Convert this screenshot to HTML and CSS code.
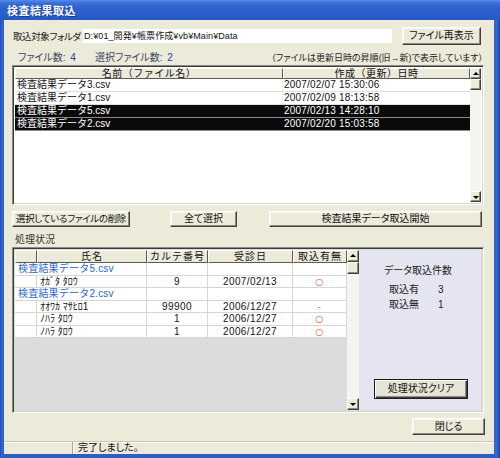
FILE: index.html
```html
<!DOCTYPE html>
<html lang="ja">
<head>
<meta charset="utf-8">
<title>検査結果取込</title>
<link rel="stylesheet" href="styles.css">
</head>
<body>
<div class="window">
  <div class="titlebar"><span class="title">検査結果取込</span></div>
  <div class="body">
    <div class="content">
      <div class="folder-row">
        <span class="lbl">取込対象フォルダ</span>
        <div class="textbox">D:¥01_開発¥帳票作成¥vb¥Main¥Data</div>
        <button class="btn btn-refresh">ファイル再表示</button>
      </div>
      <div class="info-row">
        <span class="info info-count">ファイル数: <b>4</b></span>
        <span class="info">選択ファイル数: <b>2</b></span>
        <span class="note">（ファイルは更新日時の昇順(旧→新)で表示しています）</span>
      </div>
      <div class="listbox sunken">
        <div class="list-main">
          <div class="list-head">
            <div class="hc hc-name">名前（ファイル名）</div>
            <div class="hc hc-date">作成（更新）日時</div>
          </div>
          <div class="lrow"><div class="c-name">検査結果データ3.csv</div><div class="c-date">2007/02/07 15:30:06</div></div>
          <div class="lrow"><div class="c-name">検査結果データ1.csv</div><div class="c-date">2007/02/09 18:13:58</div></div>
          <div class="lrow sel"><div class="c-name">検査結果データ5.csv</div><div class="c-date">2007/02/13 14:28:10</div></div>
          <div class="lrow sel"><div class="c-name">検査結果データ2.csv</div><div class="c-date">2007/02/20 15:03:58</div></div>
        </div>
        <div class="vscroll vs-list">
          <div class="sb-btn up"></div>
          <div class="sb-thumb"></div>
          <div class="sb-track"></div>
          <div class="sb-btn down"></div>
        </div>
      </div>
      <div class="btn-row">
        <button class="btn btn-del">選択しているファイルの削除</button>
        <button class="btn btn-all">全て選択</button>
        <button class="btn btn-start">検査結果データ取込開始</button>
      </div>
      <div class="section-label">処理状況</div>
      <div class="frame sunken">
        <div class="grid">
          <div class="gh"></div>
          <div class="gh">氏名</div>
          <div class="gh">カルテ番号</div>
          <div class="gh">受診日</div>
          <div class="gh">取込有無</div>

          <div class="gc group">検査結果データ5.csv</div>
          <div class="gc"></div><div class="gc"></div><div class="gc"></div>

          <div class="gc"></div>
          <div class="gc name">ｵｶﾞﾀ ﾀﾛｳ</div>
          <div class="gc ctr">9</div>
          <div class="gc ctr">2007/02/13</div>
          <div class="gc ctr mark">○</div>

          <div class="gc group">検査結果データ2.csv</div>
          <div class="gc"></div><div class="gc"></div><div class="gc"></div>

          <div class="gc"></div>
          <div class="gc name">ｵｵﾜｶ ﾏｻﾋﾛ1</div>
          <div class="gc ctr">99900</div>
          <div class="gc ctr">2006/12/27</div>
          <div class="gc ctr mark">-</div>

          <div class="gc"></div>
          <div class="gc name">ﾉﾊﾗ ﾀﾛｳ</div>
          <div class="gc ctr">1</div>
          <div class="gc ctr">2006/12/27</div>
          <div class="gc ctr mark">○</div>

          <div class="gc"></div>
          <div class="gc name">ﾉﾊﾗ ﾀﾛｳ</div>
          <div class="gc ctr">1</div>
          <div class="gc ctr">2006/12/27</div>
          <div class="gc ctr mark">○</div>
        </div>
        <div class="vscroll vs-grid">
          <div class="sb-btn up"></div>
          <div class="sb-thumb"></div>
          <div class="sb-track"></div>
          <div class="sb-btn down"></div>
        </div>
        <div class="summary">
          <div class="sum-title">データ取込件数</div>
          <div class="sum-table">
            <span>取込有</span><span>3</span>
            <span>取込無</span><span>1</span>
          </div>
          <button class="btn btn-default btn-clear">処理状況クリア</button>
        </div>
      </div>
      <div class="close-row">
        <button class="btn btn-close">閉じる</button>
      </div>
    </div>
    <div class="statusbar">
      <div class="sp sp1"></div>
      <div class="sp sp2">完了しました。</div>
    </div>
  </div>
</div>
</body>
</html>
```
FILE: styles.css
```css
html, body {
  margin: 0;
  padding: 0;
}
body {
  width: 500px;
  height: 458px;
  overflow: hidden;
  background: #2a5dc6;
  font-family: "Liberation Sans", "Noto Sans CJK JP", sans-serif;
  font-size: 10px;
  color: #111;
}
.window {
  width: 500px;
  height: 458px;
  display: flex;
  flex-direction: column;
  background: linear-gradient(90deg, #1e4fb8 0, #3566d0 2px, #2b5ec8 4px, #2b5ec8 494px, #3a6ad2 496px, #1c4aae 500px);
}
.titlebar {
  height: 20px;
  flex: none;
  display: flex;
  align-items: center;
  padding-left: 7px;
  background: linear-gradient(180deg, #5a8ce8 0, #3a6fd8 3px, #2c62cf 8px, #2a5ecb 15px, #2558c4 20px);
}
.title {
  color: #fff;
  font-weight: bold;
  font-size: 11px;
  letter-spacing: 0.5px;
  font-feature-settings: "palt";
  text-shadow: 1px 1px 0 #1a3d94;
}
.body {
  flex: 1;
  margin: 0 6px 4px 4px;
  background: #ecead9;
  display: flex;
  flex-direction: column;
}
.content {
  flex: 1;
  padding: 7px 10px 0 8px;
  display: flex;
  flex-direction: column;
  font-feature-settings: "palt";
}
button {
  font-family: "Liberation Sans", "Noto Sans CJK JP", sans-serif;
  font-size: 10px;
  color: #111;
  font-feature-settings: "palt";
  padding: 0;
  margin: 0;
  white-space: nowrap;
}
.btn {
  box-sizing: border-box;
  background: #ecead9;
  border: 1px solid;
  border-color: #ffffff #404040 #404040 #ffffff;
  box-shadow: inset -1px -1px 0 #8c8a80, inset 1px 1px 0 #f6f5ee;
  line-height: 1;
}
.btn-default {
  border: 1px solid #1a1a1a;
  background: #e6e4d6;
  box-shadow: inset 1px 1px 0 #ffffff, inset -1px -1px 0 #404040, inset -2px -2px 0 #8c8a80;
}
.sunken {
  box-sizing: border-box;
  border: 1px solid;
  border-color: #8c8a80 #ffffff #ffffff #8c8a80;
  box-shadow: inset 1px 1px 0 #3c3c3c, inset -1px -1px 0 #d8d6c8;
}

/* row 1 */
.folder-row {
  height: 18px;
  display: flex;
  align-items: center;
  flex: none;
}
.lbl {
  width: 70px;
  padding-left: 1px;
  white-space: nowrap;
  color: #222;
  font-size: 9.5px;
  letter-spacing: -0.4px;
}
.textbox {
  flex: 1;
  height: 14px;
  line-height: 14px;
  background: #fff;
  padding-left: 1px;
  font-size: 9px;
  letter-spacing: 0.1px;
  font-feature-settings: normal;
  white-space: nowrap;
}
.btn-refresh {
  width: 79px;
  height: 18px;
  margin-left: 10px;
  margin-right: 3px;
}

/* row 2 */
.info-row {
  margin-top: 7px;
  height: 12px;
  line-height: 12px;
  display: flex;
  flex: none;
  padding-left: 6px;
  white-space: nowrap;
}
.info {
  color: #3c4466;
}
.info b {
  font-weight: normal;
  color: #2a3c9e;
  margin-left: 2px;
}
.info-count {
  width: 77px;
}
.note {
  margin-left: auto;
  color: #222;
  font-size: 9px;
  margin-right: 1px;
}

/* list box */
.listbox {
  margin-top: 1px;
  height: 140px;
  flex: none;
  display: flex;
  padding: 2px;
  background: #fff;
}
.list-main {
  flex: 1;
  display: flex;
  flex-direction: column;
  font-feature-settings: normal;
}
.list-head {
  display: flex;
  height: 11px;
  flex: none;
}
.hc {
  box-sizing: border-box;
  background: #ecead9;
  border: 1px solid;
  border-color: #ffffff #5a5a55 #5a5a55 #ffffff;
  text-align: center;
  line-height: 9px;
  font-size: 10px;
  letter-spacing: 0.5px;
  white-space: nowrap;
}
.hc-name { width: 268px; }
.hc-date { flex: 1; }
.lrow {
  display: flex;
  height: 13px;
  line-height: 12px;
  box-sizing: border-box;
  border-bottom: 1px solid #dedede;
  font-size: 10px;
  white-space: nowrap;
}
.lrow.sel {
  background: #0a0a0a;
  color: #fff;
  border-bottom-color: #8a8a8a;
}
.c-name {
  width: 268px;
  box-sizing: border-box;
  padding-left: 2px;
  border-right: 1px solid #ececec;
  letter-spacing: 0;
}
.lrow.sel .c-name { border-right-color: #0a0a0a; }
.c-date {
  flex: 1;
  padding-left: 1px;
  letter-spacing: 0.2px;
}

/* scrollbar */
.vscroll {
  display: flex;
  flex-direction: column;
  flex: none;
  background: #f5f4ee;
}
.vs-list { width: 11px; }
.vs-grid { width: 12px; }
.sb-btn, .sb-thumb {
  box-sizing: border-box;
  background: #ecead9;
  border: 1px solid;
  border-color: #ffffff #404040 #404040 #ffffff;
  box-shadow: inset -1px -1px 0 #8c8a80;
  flex: none;
}
.sb-btn {
  height: 11px;
  display: flex;
  align-items: center;
  justify-content: center;
}
.vs-grid .sb-btn { height: 12px; }
.sb-btn::after {
  content: "";
  width: 0;
  height: 0;
  border-left: 3px solid transparent;
  border-right: 3px solid transparent;
}
.sb-btn.up::after { border-bottom: 3px solid #000; margin-bottom: 1px; }
.sb-btn.down::after { border-top: 3px solid #000; margin-top: 1px; }
.sb-thumb { height: 11px; }
.vs-grid .sb-thumb { height: 12px; }
.sb-track { flex: 1; }

/* button row */
.btn-row {
  margin-top: 6px;
  height: 16px;
  display: flex;
  flex: none;
}
.btn-row .btn { height: 16px; }
.btn-del { width: 118px; font-size: 9.5px; letter-spacing: -0.3px; }
.btn-all { width: 67px; margin-left: 40px; }
.btn-start { width: 213px; margin-left: 32px; }

.section-label {
  margin-top: 7px;
  height: 12px;
  line-height: 12px;
  padding-left: 3px;
  flex: none;
  color: #333;
}

/* grid frame */
.frame {
  margin-top: 1px;
  height: 166px;
  flex: none;
  display: flex;
  padding: 2px;
  background: #dcdcdf;
}
.grid {
  width: 332px;
  flex: none;
  display: grid;
  grid-template-columns: 22px 110px 61px 85px 54px;
  grid-template-rows: 13px;
  grid-auto-rows: 12.5px;
  align-content: start;
  background: #dcdcdf;
  font-feature-settings: normal;
}
.gh {
  box-sizing: border-box;
  background: #ecead9;
  border: 1px solid;
  border-color: #ffffff #5a5a55 #5a5a55 #ffffff;
  text-align: center;
  line-height: 11px;
  letter-spacing: 1px;
  white-space: nowrap;
}
.gc {
  box-sizing: border-box;
  background: #fff;
  border-right: 1px solid #d6d6d6;
  border-bottom: 1px solid #d6d6d6;
  line-height: 11.5px;
  white-space: nowrap;
  font-size: 10px;
}
.gc.group {
  grid-column: span 2;
  color: #2b66cc;
  padding-left: 3px;
  letter-spacing: 0.2px;
}
.gc.name {
  padding-left: 3px;
}
.gc.ctr {
  text-align: center;
  letter-spacing: 0.4px;
}
.gc.mark {
  color: #e8572c;
  font-family: "DejaVu Sans", sans-serif;
  font-size: 9.5px;
}

.summary {
  flex: 1;
  background: #e5e5f1;
  display: flex;
  flex-direction: column;
  padding: 15px 0 11px 0;
}
.sum-title {
  padding-left: 25px;
  line-height: 12px;
  color: #222;
}
.sum-table {
  margin-top: 7px;
  padding-left: 30px;
  display: grid;
  grid-template-columns: 49px auto;
  grid-auto-rows: 15px;
  line-height: 12px;
  color: #222;
}
.btn-clear {
  margin-top: auto;
  margin-left: 15px;
  width: 94px;
  height: 20px;
}

.close-row {
  margin-top: 5px;
  display: flex;
  justify-content: flex-end;
  flex: none;
}
.btn-close {
  width: 73px;
  height: 17px;
  margin-right: -1px;
}

/* status bar */
.statusbar {
  height: 13px;
  flex: none;
  display: flex;
  border-top: 1px solid #c8c6b8;
  box-shadow: inset 0 1px 0 #ffffff;
  box-sizing: border-box;
}
.sp {
  box-sizing: border-box;
  height: 100%;
  line-height: 11px;
  white-space: nowrap;
}
.sp1 {
  width: 69px;
  border-right: 1px solid #a8a698;
}
.sp2 {
  flex: 1;
  padding-left: 4px;
  border-left: 1px solid #ffffff;
  font-feature-settings: "palt";
}
```
